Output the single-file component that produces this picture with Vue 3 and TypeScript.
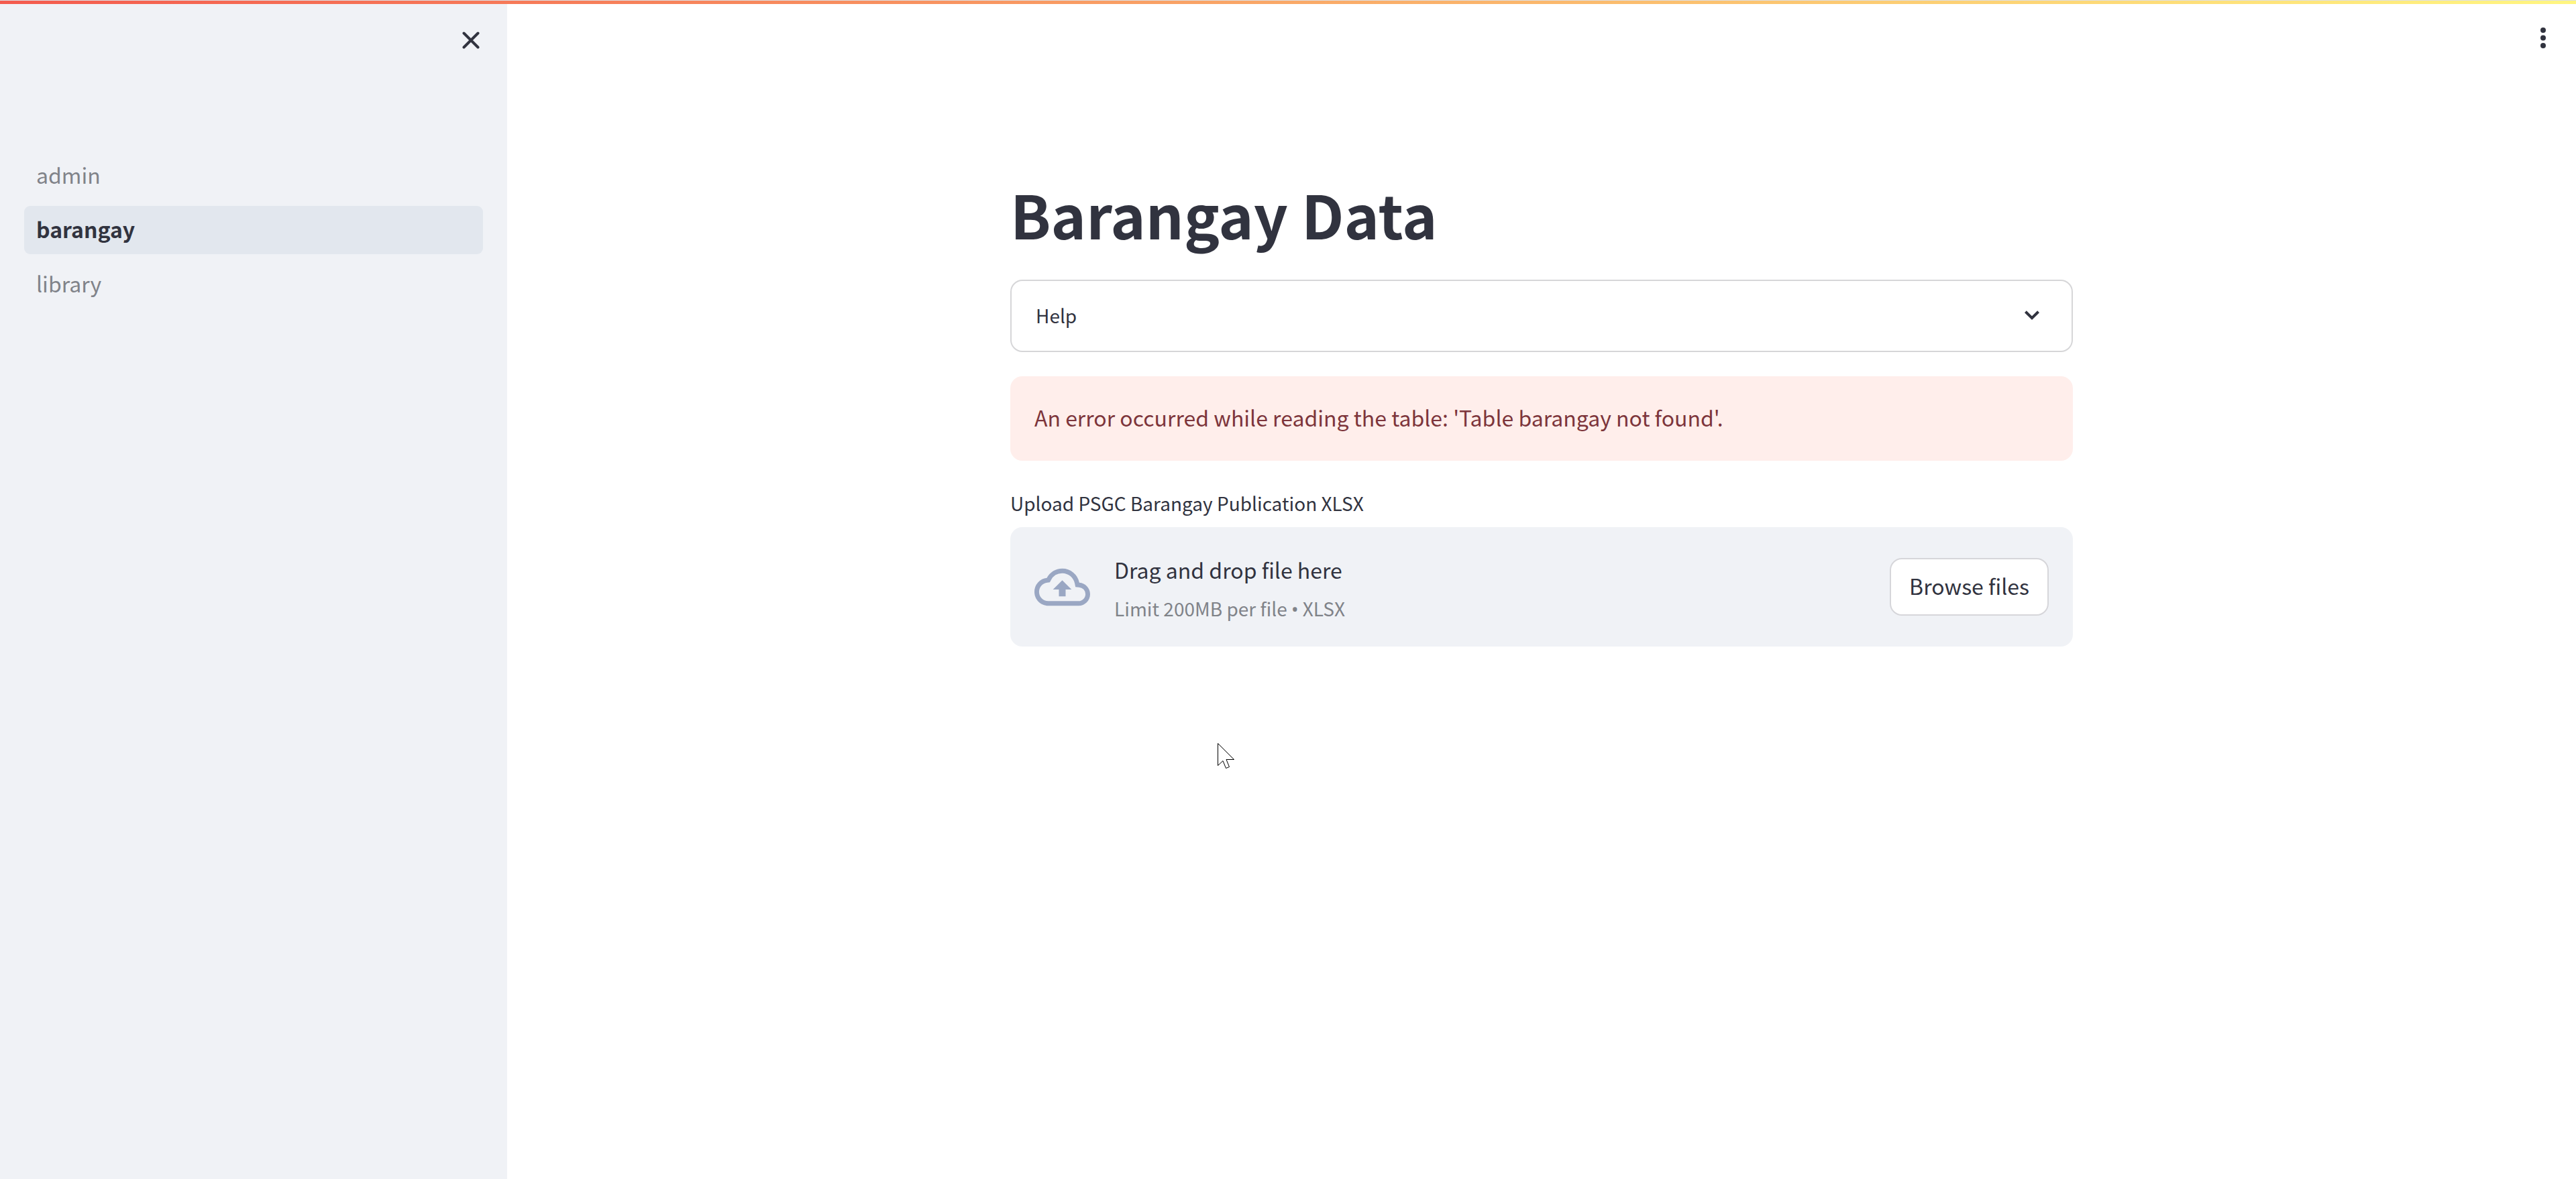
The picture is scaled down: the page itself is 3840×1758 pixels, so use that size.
<script setup lang="ts">
import { ref } from 'vue'

interface Page {
  name: string
  active: boolean
}

const pages: Page[] = [
  { name: 'admin', active: false },
  { name: 'barangay', active: true },
  { name: 'library', active: false },
]

const helpOpen = ref<boolean>(false)
const fileInput = ref<HTMLInputElement | null>(null)

function browse(): void {
  fileInput.value?.click()
}
</script>

<template>
  <div class="app">
    <div class="decoration"></div>
    <aside class="sidebar">
      <div class="sidebar-head">
        <button class="icon-button" type="button" aria-label="Close sidebar">
          <svg class="close-icon" viewBox="0 0 26 26" fill="none" stroke="currentColor" stroke-width="4" stroke-linecap="round">
            <path d="M2.5 2.5 23.5 23.5M23.5 2.5 2.5 23.5" />
          </svg>
        </button>
      </div>
      <nav class="nav" aria-label="Pages">
        <a
          v-for="page in pages"
          :key="page.name"
          href="#"
          class="nav-link"
          :class="{ active: page.active }"
          :aria-current="page.active ? 'page' : undefined"
        >{{ page.name }}</a>
      </nav>
    </aside>

    <div class="view">
      <header class="toolbar">
        <button class="icon-button" type="button" aria-label="Main menu">
          <svg class="menu-icon" viewBox="0 0 8 31" fill="currentColor">
            <circle cx="4" cy="4" r="4" />
            <circle cx="4" cy="15.5" r="4" />
            <circle cx="4" cy="27" r="4" />
          </svg>
        </button>
      </header>

      <main class="content">
        <h1 class="title">Barangay Data</h1>

        <button class="expander" type="button" :aria-expanded="helpOpen" @click="helpOpen = !helpOpen">
          <span>Help</span>
          <svg class="chevron" viewBox="0 0 22 14" fill="none" stroke="currentColor" stroke-width="4">
            <path d="M1.4 1.8 11 11.2 20.6 1.8" />
          </svg>
        </button>

        <div class="alert" role="alert">An error occurred while reading the table: 'Table barangay not found'.</div>

        <section class="uploader">
          <label class="upload-label" for="psgc-file">Upload PSGC Barangay Publication XLSX</label>
          <div class="dropzone">
            <svg class="cloud" viewBox="0 0 24 24" fill="currentColor">
              <path d="M19.35 10.04A7.49 7.49 0 0 0 12 4C9.11 4 6.6 5.64 5.35 8.04A5.994 5.994 0 0 0 0 14c0 3.31 2.69 6 6 6h13c2.76 0 5-2.24 5-5 0-2.64-2.05-4.78-4.65-4.96zM19 18H6c-2.21 0-4-1.79-4-4 0-2.05 1.53-3.76 3.56-3.97l1.07-.11.5-.95A5.469 5.469 0 0 1 12 6c2.62 0 4.88 1.86 5.39 4.43l.3 1.5 1.53.11A2.98 2.98 0 0 1 22 15c0 1.65-1.35 3-3 3zM8 13h2.55v3h2.9v-3H16l-4-4z" />
            </svg>
            <div class="instructions">
              <span class="drag">Drag and drop file here</span>
              <span class="limit">Limit 200MB per file <span class="bullet">•</span> XLSX</span>
            </div>
            <input id="psgc-file" ref="fileInput" class="file-input" type="file" accept=".xlsx" />
            <button class="browse" type="button" @click="browse">Browse files</button>
          </div>
        </section>
      </main>
    </div>

    <svg class="pointer" viewBox="0 0 26 39" aria-hidden="true">
      <path d="M.5.5V33.5L8 26.5 12.5 37.5 17.5 35.5 13 24.5H24.5Z" fill="#fff" stroke="#000" stroke-width="1" />
    </svg>
  </div>
</template>

<style>
body {
  margin: 0;
  background: #fff;
}
</style>

<style scoped>
.app {
  position: relative;
  display: flex;
  min-height: 100vh;
  color: #31333f;
  font-family: "Noto Sans CJK SC", "Noto Sans", sans-serif;
  font-size: 32px;
  line-height: 48px;
}

.app * {
  box-sizing: border-box;
}

button {
  color: inherit;
  font: inherit;
  cursor: pointer;
}

.decoration {
  position: absolute;
  top: 0;
  left: 0;
  right: 0;
  height: 6px;
  border-top: 1px solid #dee1e6;
  background: linear-gradient(90deg, #f45b4e, #fff681);
}

.sidebar {
  flex: none;
  width: 756px;
  background: #f0f2f6;
}

.sidebar-head {
  display: flex;
  justify-content: flex-end;
  padding: 36px 30px 0 0;
}

.icon-button {
  display: flex;
  align-items: center;
  justify-content: center;
  width: 48px;
  height: 48px;
  padding: 0;
  border: 0;
  background: none;
}

.close-icon {
  width: 26px;
  height: 26px;
}

.nav {
  display: flex;
  flex-direction: column;
  gap: 9px;
  padding: 142px 36px 0;
}

.nav-link {
  padding: 10px 18px 14px;
  border-radius: 9px;
  color: #808389;
  text-decoration: none;
}

.nav-link.active {
  background: #e2e7ee;
  color: #31333f;
  font-weight: 600;
}

.view {
  flex: 1;
  min-width: 0;
}

.toolbar {
  display: flex;
  justify-content: flex-end;
  padding: 32px 25px 0 0;
}

.menu-icon {
  width: 8px;
  height: 31px;
}

.content {
  max-width: 1584px;
  margin: 0 auto;
  padding-top: 180px;
}

.title {
  margin: 0 0 39px;
  font-size: 89px;
  font-weight: 700;
  line-height: 118px;
}

.expander {
  display: flex;
  align-items: center;
  justify-content: space-between;
  width: 100%;
  height: 108px;
  padding: 0 48px 2px 36px;
  border: 2px solid #d6d6d8;
  border-radius: 18px;
  background: #fff;
  font-size: 28px;
}

.chevron {
  width: 22px;
  height: 14px;
}

.alert {
  margin-top: 36px;
  padding: 37px 36px 41px;
  border-radius: 18px;
  background: #ffeeeb;
  color: #7d353b;
}

.uploader {
  margin-top: 36px;
}

.upload-label {
  display: block;
  margin-bottom: 9px;
  font-size: 28px;
  line-height: 54px;
}

.dropzone {
  display: flex;
  align-items: center;
  min-height: 178px;
  padding: 32px 36px;
  border-radius: 18px;
  background: #f0f2f6;
}

.cloud {
  width: 83px;
  height: 83px;
  margin-right: 36px;
  color: #9aa7c3;
}

.instructions {
  display: flex;
  flex: 1;
  flex-direction: column;
  gap: 10px;
  padding-top: 6px;
}

.limit {
  color: #808389;
  font-size: 28px;
}

.bullet {
  font-family: "Noto Sans", sans-serif;
}

.file-input {
  display: none;
}

.browse {
  height: 86px;
  padding: 0 27px 4px;
  border: 2px solid #d6d6da;
  border-radius: 18px;
  background: #fff;
}

.pointer {
  position: absolute;
  top: 1108px;
  left: 1815px;
  width: 26px;
  height: 39px;
}
</style>
